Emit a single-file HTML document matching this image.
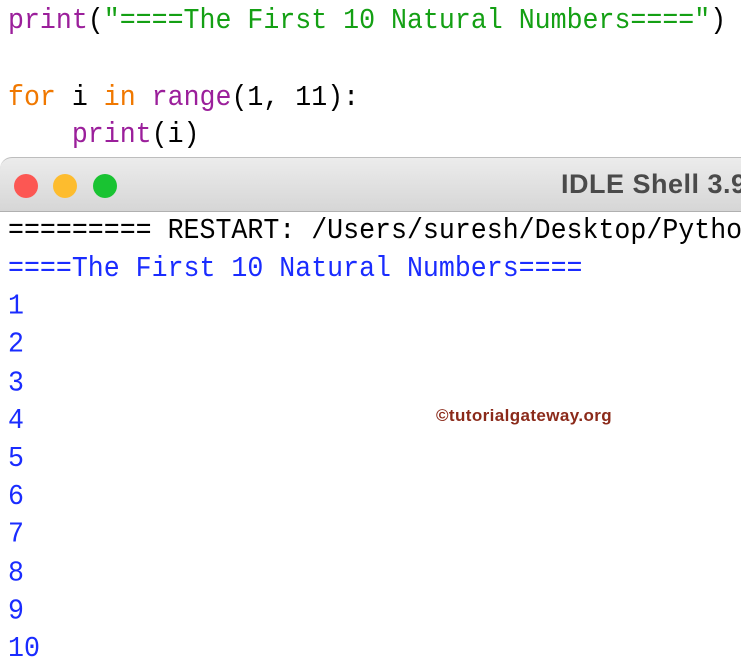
<!DOCTYPE html>
<html><head><style>
body{margin:0;width:741px;height:665px;overflow:hidden;background:#fff;position:relative;font-family:"Liberation Mono",monospace;}
.code{position:absolute;left:8px;font-size:26.6px;white-space:pre;line-height:35.2px;transform:scaleY(1.08);transform-origin:left top;}
.p{color:#9b1f9b}.g{color:#14a014}.o{color:#f07800}.k{color:#000}
.bar{position:absolute;left:0;top:157px;width:760px;height:55px;background:linear-gradient(#ececec,#d6d6d6);border-top:1px solid #bdbdbd;border-bottom:1px solid #b0b0b0;border-radius:12px 0 0 0;box-sizing:border-box;overflow:hidden;}
.dot{position:absolute;top:16px;width:24px;height:24px;border-radius:50%;}
.title{position:absolute;left:561px;top:11px;font:bold 27px "Liberation Sans",sans-serif;color:#4a4a4a;white-space:pre;letter-spacing:0.5px;}
.sh{position:absolute;left:8px;font-size:26.6px;white-space:pre;line-height:35.2px;color:#1a2cff;transform:scaleY(1.08);transform-origin:left top;}
.wm{position:absolute;left:436px;top:406px;font:bold 17px "Liberation Sans",sans-serif;color:#8b2a1a;letter-spacing:0.4px;}
</style></head><body>
<div class="code" style="top:2px"><span class="p">print</span><span class="k">(</span><span class="g">"====The First 10 Natural Numbers===="</span><span class="k">)</span></div>
<div class="code" style="top:79px"><span class="o">for</span><span class="k"> i </span><span class="o">in</span><span class="k"> </span><span class="p">range</span><span class="k">(1, 11):</span></div>
<div class="code" style="top:116px">    <span class="p">print</span><span class="k">(i)</span></div>
<div class="bar">
<div class="dot" style="left:14px;background:#fc5753"></div>
<div class="dot" style="left:53px;background:#fdbc2e"></div>
<div class="dot" style="left:93px;background:#19c332"></div>
<div class="title">IDLE Shell 3.9</div>
</div>
<div class="sh" style="top:212px;color:#000">========= RESTART: /Users/suresh/Desktop/Python</div>
<div class="sh" style="top:250px">====The First 10 Natural Numbers====
1
2
3
4
5
6
7
8
9
10</div>
<div class="wm">©tutorialgateway.org</div>
</body></html>
